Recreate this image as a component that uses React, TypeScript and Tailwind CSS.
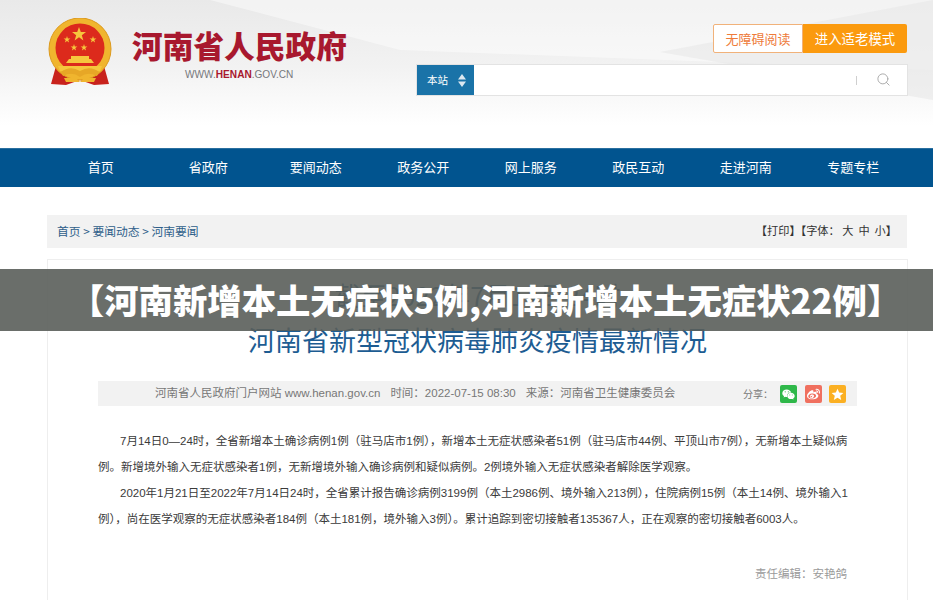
import { Search } from "lucide-react";
import { FaWeibo, FaWeixin } from "react-icons/fa";

const navItems = ["首页", "省政府", "要闻动态", "政务公开", "网上服务", "政民互动", "走进河南", "专题专栏"];

const cjk = "font-['Noto_Sans_CJK_SC','Liberation_Sans',sans-serif]";
const latinFirst = "font-['Liberation_Sans','Noto_Sans_CJK_SC',sans-serif]";

// national emblem, simplified
function Emblem() {
  return (
    <svg width="64" height="68" viewBox="0 0 64 68" className="shrink-0">
      <path d="M8 48 L3 66 L18 67 L32 62 L46 67 L61 66 L56 48 Z" fill="#c8221c" />
      <circle cx="32" cy="31" r="31" fill="#f0b52e" />
      <circle cx="32" cy="31" r="31" fill="none" stroke="#dd9a1e" strokeWidth="1" />
      <circle cx="32" cy="30" r="24.5" fill="#dc2a1c" />
      <polygon points="31,9 32.8,14 38,14 33.8,17.2 35.4,22.4 31,19.2 26.6,22.4 28.2,17.2 24,14 29.2,14" fill="#f6c63d" />
      <polygon points="19,18 19.8,20.4 22.4,20.4 20.3,22 21.1,24.4 19,22.9 16.9,24.4 17.7,22 15.6,20.4 18.2,20.4" fill="#f6c63d" />
      <polygon points="45,18 45.8,20.4 48.4,20.4 46.3,22 47.1,24.4 45,22.9 42.9,24.4 43.7,22 41.6,20.4 44.2,20.4" fill="#f6c63d" />
      <polygon points="26,26 26.8,28.4 29.4,28.4 27.3,30 28.1,32.4 26,30.9 23.9,32.4 24.7,30 22.6,28.4 25.2,28.4" fill="#f6c63d" />
      <polygon points="36,26 36.8,28.4 39.4,28.4 37.3,30 38.1,32.4 36,30.9 33.9,32.4 34.7,30 32.6,28.4 35.2,28.4" fill="#f6c63d" />
      <path d="M21 41 L43 41 L46 45 L18 45 Z" fill="#f6c63d" />
      <rect x="23" y="38" width="18" height="3" fill="#f6c63d" />
      <path d="M10 48 L54 48 L52 53 L12 53 Z" fill="#f6c63d" />
      <path d="M13 54 Q22 47 32 53 Q42 47 51 54 L49 58 Q40 53 32 59 Q24 53 15 58 Z" fill="#e7a726" />
      <path d="M16 60 L28 60 L32 64 L36 60 L48 60 L46 64 L18 64 Z" fill="#f0b52e" />
    </svg>
  );
}

export default function App() {
  return (
    <div className={`relative h-[600px] w-[933px] overflow-hidden bg-white ${cjk}`}>
      {/* header */}
      <header className="relative flex h-[148px] justify-between overflow-hidden bg-[linear-gradient(180deg,#e9e9e9_0%,#f2f2f2_45%,#ffffff_85%)] pl-12 pr-[25px]">
        <svg className="absolute inset-0" width="933" height="148">
          <polygon points="210,0 933,0 933,70 400,50" fill="#ffffff" opacity="0.45" />
          <polygon points="660,52 933,0 933,100" fill="#e8e8e8" opacity="0.6" />
        </svg>
        <div className="relative flex items-start pt-[18px]">
          <Emblem />
          <div className="ml-5 flex flex-col">
            <div className="mt-[6px] text-[30.7px] leading-[42px] font-black whitespace-nowrap text-[#a8182e]">河南省人民政府</div>
            <div className="mt-[2px] ml-[53px] font-['Liberation_Sans',sans-serif] text-[10.1px] leading-[14px] text-[#77787c]">
              WWW.<span className="font-bold text-[#a8182e]">HENAN</span>.GOV.CN
            </div>
          </div>
        </div>
        <div className="relative flex w-[492px] flex-col items-end pt-6">
          <div className="mr-px flex h-[29px]">
            <div className="flex w-[90px] items-center justify-center rounded-l-[2px] border border-[#f1b27a] bg-white text-[13px] text-[#ee7b3a]">无障碍阅读</div>
            <div className="flex w-[104px] items-center justify-center rounded-r-[2px] bg-[#fb9a0e] text-[13.4px] text-white">进入适老模式</div>
          </div>
          <div className="mt-[11px] flex h-[32px] w-full items-center border border-[#e3e3e3] bg-white">
            <div className="flex h-full w-[57px] items-center gap-[10px] bg-[#1a73a8] pl-[10px] text-[10.5px] text-white">
              本站
              <svg width="8" height="13" viewBox="0 0 8 13">
                <path d="M4 0 L8 5.5 L0 5.5 Z M0 7.5 L8 7.5 L4 13 Z" fill="#dbe8f1" />
              </svg>
            </div>
            <div className="ml-auto h-[9px] w-px bg-[#cfcfcf]" />
            <Search size={15} strokeWidth={1.5} className="mr-[16px] ml-[19px] -translate-y-px text-[#a8a8a8]" />
          </div>
        </div>
      </header>

      {/* nav */}
      <nav className="h-[39px] border-t border-[#2a6f9f] bg-[#01548f] pl-[47px]">
        <ul className="grid h-full w-[860px] grid-cols-8 items-center pb-[3px] text-center text-[13px] text-white">
          {navItems.map((item) => (
            <li key={item}>{item}</li>
          ))}
        </ul>
      </nav>

      <main className="px-[47px] pt-[28px]">
        <div className="flex h-[33px] w-[860px] items-center justify-between bg-[#f2f2f2] px-[10px] pb-[2px] text-[11.8px] text-[#2f5f8a]">
          <span>首页 &gt; 要闻动态 &gt; 河南要闻</span>
          <span className="text-[11.2px] text-[#333]">【打印】【字体：&nbsp;大&nbsp;&nbsp;中&nbsp;&nbsp;小】</span>
        </div>

        <article className="mt-[11px] h-[400px] w-[861px] border border-[#eeeeee] px-[50px] pt-[12px]">
          <h1 className="text-center text-[27px] leading-[45px] font-normal whitespace-nowrap text-[#1d5c92]">
            <div className="text-[26px]">截至2022年7月14日24时</div>
            <div>河南省新型冠状病毒肺炎疫情最新情况</div>
          </h1>
          <div className={`mt-[19px] flex h-[25px] items-center bg-[#f2f2f2] pt-[1px] pl-[57px] text-[11.5px] whitespace-nowrap text-[#777] ${latinFirst}`}>
            <span>河南省人民政府门户网站 www.henan.gov.cn</span>
            <span className="ml-[10px]">时间：2022-07-15 08:30</span>
            <span className="ml-[10px]">来源：河南省卫生健康委员会</span>
            <span className="ml-auto text-[10px]">分享：</span>
            <div className="mr-[11px] ml-[7px] flex gap-[7.5px]">
              <span className="flex h-[18px] w-[17px] items-center justify-center rounded-[2px] bg-[#2fb84a] text-white">
                <FaWeixin size={13} />
              </span>
              <span className="flex h-[18px] w-[17px] items-center justify-center rounded-[2px] bg-[#f0705f] text-white">
                <FaWeibo size={13} />
              </span>
              <span className="flex h-[18px] w-[17px] items-center justify-center rounded-[2px] bg-[#fbb023]">
                <svg width="13" height="13" viewBox="0 0 13 13">
                  <polygon points="6.5,0.8 8.2,4.6 12.4,5 9.2,7.8 10.2,12 6.5,9.8 2.8,12 3.8,7.8 0.6,5 4.8,4.6" fill="#fff" />
                </svg>
              </span>
            </div>
          </div>
          <div className={`mt-[22px] text-[11.5px] leading-[26px] text-[#3a3a3a] ${latinFirst}`}>
            <p className="indent-[22px]">7月14日0—24时，全省新增本土确诊病例1例（驻马店市1例），新增本土无症状感染者51例（驻马店市44例、平顶山市7例），无新增本土疑似病例。新增境外输入无症状感染者1例，无新增境外输入确诊病例和疑似病例。2例境外输入无症状感染者解除医学观察。</p>
            <p className="indent-[22px]">2020年1月21日至2022年7月14日24时，全省累计报告确诊病例3199例（本土2986例、境外输入213例），住院病例15例（本土14例、境外输入1例），尚在医学观察的无症状感染者184例（本土181例，境外输入3例）。累计追踪到密切接触者135367人，正在观察的密切接触者6003人。</p>
          </div>
          <div className="mt-[33px] pr-[10px] text-right text-[11.5px] text-[#9a9a9a]">责任编辑：安艳鸽</div>
        </article>
      </main>

      {/* title band over the page */}
      <div className="absolute top-[269px] left-0 flex h-[62px] w-full items-center justify-center bg-[#5a5e5a]/90 pb-[1px] pl-[38px] text-[34.4px] font-black whitespace-nowrap text-white">
        【河南新增本土无症状5例,河南新增本土无症状22例】
      </div>
    </div>
  );
}
